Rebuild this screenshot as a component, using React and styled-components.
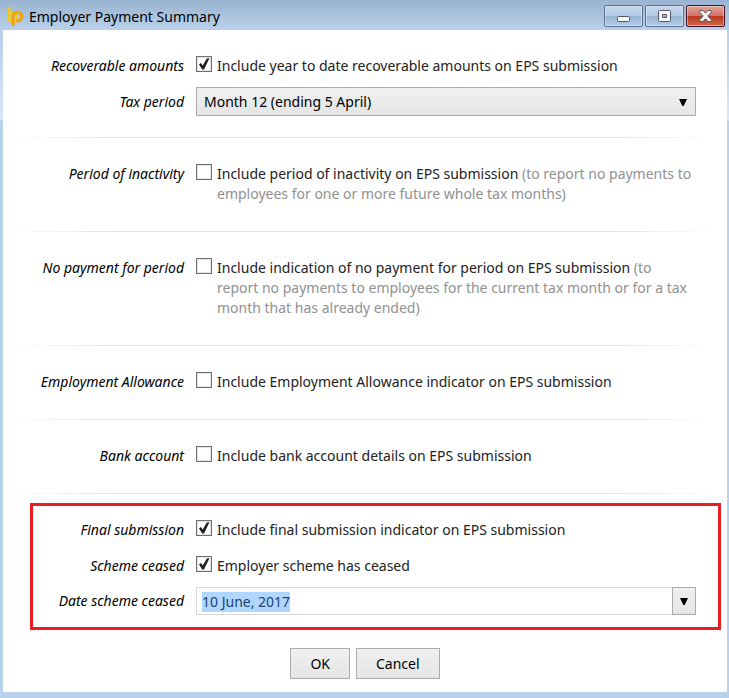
import React, { useEffect, useRef } from "react";
import styled, { createGlobalStyle } from "styled-components";

const App = () => {
  const dateRef = useRef(null);

  useEffect(() => {
    dateRef.current.focus();
    dateRef.current.select();
  }, []);

  return (
    <>
      <GlobalStyle />
      <Window>
        <TitleBar>
          <Logo />
          <Title>Employer Payment Summary</Title>
          <WindowButtons>
            <WindowBtn aria-label="Minimize">
              <MinimizeIcon />
            </WindowBtn>
            <WindowBtn aria-label="Maximize">
              <MaximizeIcon />
            </WindowBtn>
            <WindowBtn $close aria-label="Close">
              <CloseIcon />
            </WindowBtn>
          </WindowButtons>
        </TitleBar>

        <Content>
          <Form>
            <Section>
              <CheckRow
                id="recoverable"
                label="Recoverable amounts"
                text="Include year to date recoverable amounts on EPS submission"
                checked
              />
              <ControlRow>
                <Label htmlFor="period">Tax period</Label>
                <SelectBox>
                  <Select id="period">
                    <option>Month 12 (ending 5 April)</option>
                  </Select>
                  <Arrow />
                </SelectBox>
              </ControlRow>
            </Section>
            <Divider />
            <Section>
              <CheckRow
                id="inactivity"
                label="Period of inactivity"
                text="Include period of inactivity on EPS submission"
                hint="(to report no payments to employees for one or more future whole tax months)"
              />
            </Section>
            <Divider />
            <Section>
              <CheckRow
                id="nopayment"
                label="No payment for period"
                text="Include indication of no payment for period on EPS submission"
                hint="(to report no payments to employees for the current tax month or for a tax month that has already ended)"
              />
            </Section>
            <Divider />
            <Section>
              <CheckRow
                id="allowance"
                label="Employment Allowance"
                text="Include Employment Allowance indicator on EPS submission"
              />
            </Section>
            <Divider />
            <Section>
              <CheckRow
                id="bank"
                label="Bank account"
                text="Include bank account details on EPS submission"
              />
            </Section>
            <Divider />
            <Highlight>
              <CheckRow
                id="final"
                label="Final submission"
                text="Include final submission indicator on EPS submission"
                checked
              />
              <CheckRow
                id="ceased"
                label="Scheme ceased"
                text="Employer scheme has ceased"
                checked
              />
              <ControlRow>
                <Label htmlFor="date">Date scheme ceased</Label>
                <DateBox>
                  <DateInput id="date" ref={dateRef} defaultValue="10 June, 2017" />
                  <DropBtn type="button" aria-label="Choose date">
                    <Arrow />
                  </DropBtn>
                </DateBox>
              </ControlRow>
            </Highlight>
          </Form>
          <Footer>
            <Button>OK</Button>
            <Button>Cancel</Button>
          </Footer>
        </Content>
      </Window>
    </>
  );
};

const CheckRow = ({ id, label, text, hint, checked }) => (
  <Row>
    <Label as="span">{label}</Label>
    <CheckLabel htmlFor={id}>
      <Checkbox id={id} type="checkbox" defaultChecked={checked} />
      <span>
        {text} {hint && <Hint>{hint}</Hint>}
      </span>
    </CheckLabel>
  </Row>
);

const Logo = () => (
  <svg width="17" height="20" viewBox="0 0 17 20" fill="none" strokeWidth="3">
    <path d="M2 0v10.500a4 4 0 0 0 4 4" stroke="#f2cb12" />
    <path d="M2 5.500h3.500a4.500 4.500 0 0 1 4.500 4.500a4.500 4.500 0 0 1-4 4.500" stroke="#f2cb12" />
    <path d="M6 19V9.500a4.500 4.500 0 1 1 4.500 4.500H9" stroke="#f3a010" />
  </svg>
);

const MinimizeIcon = () => (
  <svg width="13" height="14" viewBox="0 0 13 14">
    <rect x="0.5" y="7.500" width="12" height="5" rx="1" fill="#f6f6f6" stroke="#535666" />
  </svg>
);

const MaximizeIcon = () => (
  <svg width="13" height="12" viewBox="0 0 13 12">
    <path
      d="M1.500 0.500h10a1 1 0 0 1 1 1v9a1 1 0 0 1-1 1h-10a1 1 0 0 1-1-1v-9a1 1 0 0 1 1-1zM4.500 4.500v3h4v-3z"
      fill="#f6f6f6"
      fillRule="evenodd"
      stroke="#535666"
    />
  </svg>
);

const CloseIcon = () => (
  <svg width="13" height="12" viewBox="0 0 13 12">
    <path
      d="M1 .5h3l2.500 2.700L9 .5h3l.5 1.500-3.700 4 3.700 4-.5 1.500H9L6.500 8.800 4 11.500H1L.5 10l3.700-4L.5 2z"
      fill="#f6f6f6"
      stroke="#535666"
    />
  </svg>
);

const Arrow = () => (
  <ArrowSvg width="8" height="7" viewBox="0 0 8 7">
    <path d="M0 0h8L4.700 7H3.300z" fill="#000" />
  </ArrowSvg>
);

const GlobalStyle = createGlobalStyle`
  * {
    box-sizing: border-box;
  }

  body {
    margin: 0;
    background: #b9d1ea;
  }

  body, button, input, select {
    font-family: "Noto Sans", "Open Sans", sans-serif;
    font-size: 14px;
    line-height: 20px;
    color: #000;
  }
`;

const Window = styled.div`
  padding: 0 2px 6px 3px;
  /* light reflection down the side frames */
  background: linear-gradient(#b9d1ea 40px, #d9e7f6 120px, #b9d1ea 121px);
`;

const TitleBar = styled.header`
  display: flex;
  align-items: flex-end;
  height: 30px;
  margin: 0 -2px 0 -3px;
  padding: 0 4px 3px 7px;
  background: linear-gradient(#99b4d1, #b9d1ea);
`;

const Title = styled.h1`
  flex: 1;
  margin: 0 0 0 5px;
  font-size: 14px;
  font-weight: 400;
`;

const WindowButtons = styled.div`
  display: flex;
  gap: 2px;
`;

const WindowBtn = styled.button`
  display: flex;
  align-items: center;
  justify-content: center;
  width: 39px;
  height: 22px;
  padding: 0;
  border: 1px solid ${({ $close }) => ($close ? "#431422" : "#5a6f8b")};
  border-radius: 2px;
  background: ${({ $close }) =>
    $close
      ? "linear-gradient(#e3a196 0%, #cf7567 48%, #b8351c 50%, #cf6b50 100%)"
      : "linear-gradient(#c3d6ec 0%, #b4cae3 48%, #98b3d2 50%, #b3cce6 100%)"};
  box-shadow: inset 0 0 0 1px rgba(255, 255, 255, 0.4);
`;

const Content = styled.main`
  padding-bottom: 13px;
  background: #fff;
`;

const Form = styled.div`
  padding: 0 31px 0 27px;
`;

const Section = styled.section`
  padding: 18px 0 19px;
`;

const Divider = styled.div`
  height: 1px;
  margin: 0 -20px;
  background: linear-gradient(
    to right,
    transparent,
    #e2e2e2 15%,
    #e2e2e2 85%,
    transparent
  );
`;

const Row = styled.div`
  display: grid;
  grid-template-columns: 154px 1fr;
  column-gap: 12px;
  padding: 8px 0;
`;

const ControlRow = styled(Row)`
  align-items: center;
  padding: 3px 0 2px;
`;

const Highlight = styled.section`
  margin: 9px -25px 0 0;
  padding: 6px 22px 10px 0;
  border: 3px solid #ed1c24;

  ${Row} {
    grid-template-columns: 151px 1fr;
  }
`;

const Label = styled.label`
  font-style: italic;
  text-align: right;
  white-space: nowrap;
`;

const CheckLabel = styled.label`
  display: flex;
  align-items: flex-start;
  gap: 5px;
  color: #222;
`;

const Hint = styled.span`
  color: #919191;
`;

const Checkbox = styled.input`
  appearance: none;
  flex: none;
  width: 16px;
  height: 16px;
  margin: 0;
  border: 1px solid #707070;
  background: #fff;
  box-shadow: inset 0 0 0 1px #e4e4e4;

  &:checked {
    background: #fff
      url("data:image/svg+xml,%3Csvg xmlns='http://www.w3.org/2000/svg' viewBox='0 0 14 14'%3E%3Cpath d='M2 7.300L4 6l1.700 2.600L9.800 1.500l2.700-.3L7 12.500H5z' fill='%23212121'/%3E%3C/svg%3E");
  }
`;

const SelectBox = styled.div`
  position: relative;

  svg {
    position: absolute;
    top: 12px;
    right: 9px;
    pointer-events: none;
  }
`;

const Select = styled.select`
  display: block;
  appearance: none;
  width: 100%;
  height: 29px;
  padding: 0 7px;
  border: 1px solid #acacac;
  border-radius: 0;
  background: linear-gradient(#f0f0f0, #e5e5e5);
`;

const ArrowSvg = styled.svg`
  display: block;
`;

const DateBox = styled.div`
  display: flex;
  height: 28px;
`;

const DateInput = styled.input`
  flex: 1;
  min-width: 0;
  padding: 1px 5px 0;
  border: 1px solid #d9d9d9;
  border-right: none;
  outline: none;

  &::selection {
    color: #1b3f73;
    background: rgba(173, 214, 255, 0.99);
  }
`;

const DropBtn = styled.button`
  display: flex;
  align-items: center;
  justify-content: center;
  width: 24px;
  padding: 0;
  border: 1px solid #acacac;
  background: linear-gradient(#f0f0f0, #e5e5e5);
`;

const Footer = styled.footer`
  display: flex;
  justify-content: center;
  gap: 6px;
  margin-top: 18px;
`;

const Button = styled.button`
  height: 31px;
  padding: 0 19px;
  border: 1px solid #acacac;
  background: linear-gradient(#f0f0f0, #e5e5e5);
`;

export default App;
